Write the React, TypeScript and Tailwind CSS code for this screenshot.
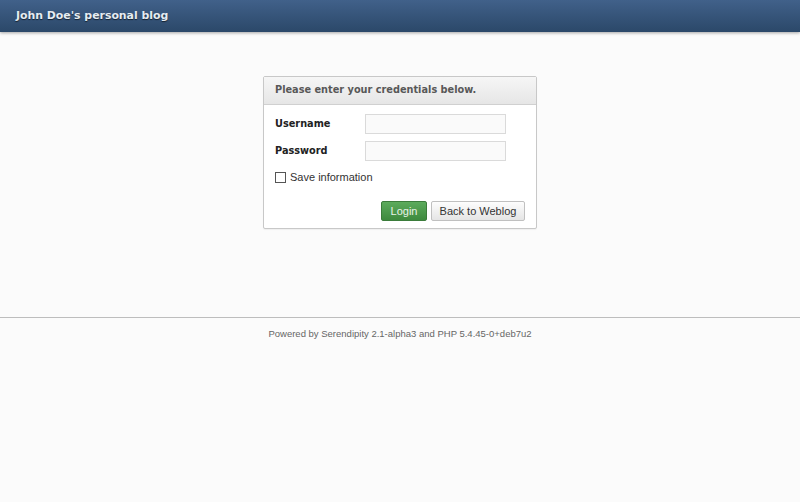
import React from 'react';

const sans = "font-['DejaVu_Sans',sans-serif]";
const arial = "font-['Liberation_Sans',Arial,sans-serif]";

export default function App() {
  return (
    <div className="min-h-[502px] w-[800px] bg-[#fbfbfb]">
      <header className="h-[32px] bg-gradient-to-b from-[#41618a] to-[#2b4869] shadow-[0_1px_3px_rgba(0,0,0,0.35)] flex items-center px-4">
        <h1 className={`${sans} text-[10.9px] font-bold text-[#e6ecf2] [text-shadow:0_1px_1px_rgba(0,0,0,0.6)]`}>
          John Doe's personal blog
        </h1>
      </header>

      <main className="flex justify-center pt-[44px]">
        <form className="w-[274px] border border-[#c8c8c8] rounded-[2px] bg-white shadow-[0_1px_1px_rgba(0,0,0,0.05)]">
          <div className="h-[28px] flex items-center px-[11px] bg-gradient-to-b from-[#f6f6f6] to-[#e6e6e6] border-b border-[#d0d0d0]">
            <h2 className={`${sans} text-[9.75px] font-bold text-[#585858]`}>
              Please enter your credentials below.
            </h2>
          </div>

          <div className="px-[11px] pt-[9px] pb-[7px]">
            <div className="flex flex-col gap-[7px]">
              <label className="flex items-center h-[20px] leading-none">
                <span className={`${sans} w-[90px] text-[9.75px] font-bold text-[#222]`}>Username</span>
                <input className="w-[141px] h-[20px] border border-[#dadada] bg-[#fafafa] outline-none" />
              </label>
              <label className="flex items-center h-[20px] leading-none">
                <span className={`${sans} w-[90px] text-[9.75px] font-bold text-[#222]`}>Password</span>
                <input type="password" className="w-[141px] h-[20px] border border-[#dadada] bg-[#fafafa] outline-none" />
              </label>
            </div>

            <label className="flex items-center gap-[4px] mt-[11px] h-[11px] leading-none">
              <span className="w-[11px] h-[11px] border border-[#555] bg-white" />
              <span className={`${arial} text-[11px] text-[#333]`}>Save information</span>
            </label>

            <div className="flex justify-end gap-[4px] mt-[18px]">
              <button className={`${arial} w-[46px] h-[20px] leading-none text-[11px] text-[#e9f3e9] rounded-[2px] border border-[#3b7c3b] bg-gradient-to-b from-[#5cab5c] to-[#3e8a3e]`}>
                Login
              </button>
              <button className={`${arial} w-[94px] h-[20px] leading-none text-[11px] text-[#333] rounded-[2px] border border-[#c0c0c0] bg-gradient-to-b from-[#fdfdfd] to-[#e5e5e5]`}>
                Back to Weblog
              </button>
            </div>
          </div>
        </form>
      </main>

      <footer className="mt-[88px] border-t border-[#bdbdbd] pt-[9px] text-center">
        <p className={`${arial} text-[9.5px] text-[#666]`}>
          Powered by Serendipity 2.1-alpha3 and PHP 5.4.45-0+deb7u2
        </p>
      </footer>
    </div>
  );
}
